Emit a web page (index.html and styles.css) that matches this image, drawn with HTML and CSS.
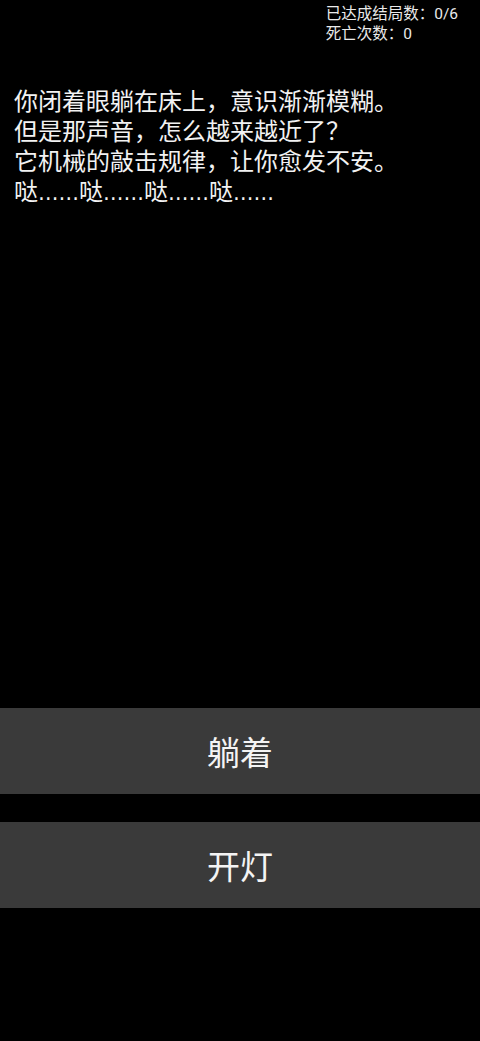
FILE: index.html
```html
<!DOCTYPE html>
<html lang="zh-CN">
<head>
<meta charset="utf-8">
<meta name="viewport" content="width=device-width, initial-scale=1">
<title>哒哒</title>
<link rel="stylesheet" href="styles.css">
</head>
<body>
<div class="screen">
  <div class="stats">
    <div class="stat">已达成结局数：0/6</div>
    <div class="stat">死亡次数：0</div>
  </div>
  <div class="story">
    <p class="line">你闭着眼躺在床上，意识渐渐模糊。</p>
    <p class="line">但是那声音，怎么越来越近了？</p>
    <p class="line">它机械的敲击规律，让你愈发不安。</p>
    <p class="line">哒<span class="dots">……</span>哒<span class="dots">……</span>哒<span class="dots">……</span>哒<span class="dots">……</span></p>
  </div>
  <div class="choices">
    <button class="choice">躺着</button>
    <button class="choice">开灯</button>
  </div>
</div>
</body>
</html>
```

FILE: styles.css
```css
html, body {
  margin: 0;
  padding: 0;
  background: #000;
}
body {
  font-family: Roboto, "Noto Sans CJK SC", sans-serif;
  color: #f2f2f2;
}
.screen {
  min-height: 1041px;
  display: flex;
  flex-direction: column;
}
.stats {
  align-self: flex-end;
  padding: 5px 22px 0 0;
  font-size: 15.5px;
  line-height: 19.5px;
  color: #eaeaea;
}
.story {
  padding: 43px 14px 0 14px;
}
.line {
  margin: 0;
  font-size: 24px;
  line-height: 30px;
}
.dots {
  font-family: "DejaVu Sans", sans-serif;
  font-size: 20.5px;
}
.choices {
  margin-top: auto;
  display: flex;
  flex-direction: column;
  gap: 28px;
  padding-bottom: 133px;
}
.choice {
  display: flex;
  align-items: center;
  justify-content: center;
  height: 86px;
  border: 0;
  margin: 0;
  background: #3a3a3a;
  color: #f4f4f4;
  font-family: Roboto, "Noto Sans CJK SC", sans-serif;
  font-size: 33px;
  padding: 0;
}
```
